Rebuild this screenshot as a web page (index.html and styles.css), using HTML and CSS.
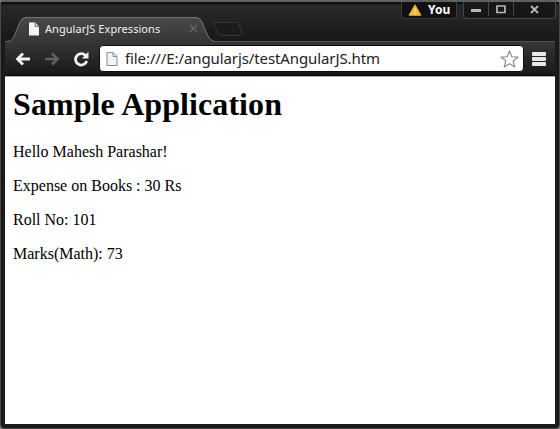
FILE: index.html
```
<!DOCTYPE html>
<html lang="en">
<head>
<meta charset="utf-8">
<title>AngularJS Expressions</title>
<link rel="stylesheet" href="styles.css">
</head>
<body>
<div class="window">
  <header class="strip">
    <div class="tab">
      <svg class="tab-shape" width="208" height="25" viewBox="0 0 208 25">
        <defs><linearGradient id="g" x1="0" y1="0" x2="0" y2="1"><stop offset="0" stop-color="#484848"/><stop offset="1" stop-color="#363636"/></linearGradient></defs>
        <path d="M0 25C5 24 6 22 8 17L13 5Q15 .5 19 .5H189Q193 .5 195 5L200 17Q203 24 208 25Z" fill="url(#g)"/>
        <path d="M0 24.5C5 24 6 22 8 17L13 5Q15 .5 19 .5H189Q193 .5 195 5L200 17Q203 24 208 24.5" fill="none" stroke="#747474"/>
      </svg>
      <div class="tab-content">
        <svg width="12" height="14" viewBox="0 0 12 14"><path d="M1 .5h6l4 4v9H1z" fill="#f3f3f3"/><path d="M7 .5v4h4" fill="#ccc" stroke="#777" stroke-width=".8"/></svg>
        <span class="tab-title">AngularJS Expressions</span>
        <svg class="tab-close" width="9" height="9" viewBox="0 0 9 9"><path d="M1 1l7 7M8 1L1 8" stroke="#626262" stroke-width="1.700"/></svg>
      </div>
    </div>
    <svg class="new-tab" width="32" height="15" viewBox="0 0 32 15"><path d="M3 .5H24Q26 .5 27 3L30 10Q31 13.500 28 13.500H9Q7 13.500 6 11L2 3Q1 .5 3 .5Z" fill="#1b1b1b" stroke="#383838"/></svg>
    <div class="controls">
      <div class="user">
        <svg width="14" height="12" viewBox="0 0 14 12"><path d="M7 .8L13 11.300H1Z" fill="#f9bd3c" stroke="#f0a020" stroke-linejoin="round"/><path d="M7 4v4M7 9v1.300" stroke="#ffd97a" stroke-width="1.300"/></svg>
        <span>You</span>
      </div>
      <div class="buttons">
        <div class="min"><svg width="10" height="4" viewBox="0 0 10 4"><path d="M0 0h10v3H0z" fill="#b8b8b8"/></svg></div>
        <div class="max"><svg width="10" height="9" viewBox="0 0 10 9"><path d="M1 1h8v6.500H1z" fill="none" stroke="#b8b8b8" stroke-width="1.700"/></svg></div>
        <div class="shut"><svg width="9" height="9" viewBox="0 0 9 9"><path d="M1 1l7 7M8 1L1 8" stroke="#b8b8b8" stroke-width="1.800"/></svg></div>
      </div>
    </div>
  </header>
  <nav class="toolbar">
    <svg width="16" height="14" viewBox="0 0 16 14"><path d="M8 1.500L2.500 7L8 12.500M3 7H15" fill="none" stroke="#f0f0f0" stroke-width="2.800"/></svg>
    <svg class="fwd" width="16" height="14" viewBox="0 0 16 14"><path d="M8 1.500L13.500 7L8 12.500M13 7H1" fill="none" stroke="#606060" stroke-width="2.600"/></svg>
    <svg class="reload" width="16" height="16" viewBox="0 0 16 16"><path d="M12.500 4.500A5.700 5.700 0 1 0 13.700 10" fill="none" stroke="#f0f0f0" stroke-width="2.800"/><path d="M15.500 .8V7.500H8.800Z" fill="#f0f0f0"/></svg>
    <div class="address">
      <svg width="12" height="14" viewBox="0 0 12 14"><path d="M1 .5h6l4 4v9H1z" fill="#f4f4f4" stroke="#8c8c8c"/><path d="M7 .5v4h4" fill="none" stroke="#8c8c8c"/></svg>
      <span class="url">file:///E:/angularjs/testAngularJS.htm</span>
      <svg class="star" width="19" height="18" viewBox="0 0 19 18"><path d="M9.500 1L11.800 6.700L18 7.100L13.200 11L14.800 17L9.500 13.700L4.200 17L5.800 11L1 7.100L7.200 6.700Z" fill="#fff" stroke="#888" stroke-width="1.100" stroke-linejoin="round"/></svg>
    </div>
    <svg class="menu" width="14" height="14" viewBox="0 0 14 14"><g fill="#e9e9e9"><rect width="14" height="4" rx="1"/><rect y="5" width="14" height="4" rx="1"/><rect y="10" width="14" height="4" rx="1"/></g></svg>
  </nav>
  <main class="page">
    <h1>Sample Application</h1>
    <p>Hello Mahesh Parashar!</p>
    <p>Expense on Books : 30 Rs</p>
    <p>Roll No: 101</p>
    <p>Marks(Math): 73</p>
  </main>
</div>
</body>
</html>
```
FILE: styles.css
```
* { box-sizing: border-box; }
body { margin: 0; background: #777; overflow: hidden; }
svg { display: block; flex: none; }
.window {
  width: 560px; height: 429px;
  display: flex; flex-direction: column;
  padding: 0 4px 4px;
  border: 1px solid #484848; border-top: 2px solid #606060; border-bottom-color: #444;
  border-radius: 5px;
  background: #1a1a1a;
  font-family: "Noto Sans", sans-serif;
}
.strip {
  height: 39px; flex: none; display: flex; align-items: flex-end;
  margin: 0 -4px; padding-left: 6px;
  background: linear-gradient(#101010 0, #101010 2px, #292929 3px, #1a1a1a 34px);
}
.tab { display: grid; width: 208px; height: 25px; margin-bottom: -1px; position: relative; }
.tab-shape, .tab-content { grid-area: 1 / 1; }
.tab-content { display: flex; align-items: center; padding: 0 17px 2px 21px; }
.tab-title {
  flex: 1; margin-left: 5px; color: #f2f2f2;
  font-size: 11px; line-height: 16px; letter-spacing: .05px; white-space: nowrap;
}
.new-tab { margin: 0 0 4px -3px; }
.controls { display: flex; align-self: flex-start; margin-left: auto; padding-right: 3px; gap: 6px; }
.user {
  display: flex; align-items: center; width: 56px; height: 17px; padding-left: 6px; gap: 6px;
  border: 1px solid #3c3c3c; border-top: 0; border-radius: 0 0 4px 4px;
  background: #111; color: #fff; font-size: 12px; font-weight: 700; line-height: 16px;
}
.buttons {
  display: flex; height: 17px; padding-bottom: 2px;
  border: 1px solid #474747; border-top: 0; border-radius: 0 0 4px 4px; background: #171717;
}
.buttons div { display: flex; align-items: center; justify-content: center; }
.min { width: 25px; padding-top: 4px; border-right: 1px solid #474747; }
.max { width: 25px; border-right: 1px solid #474747; }
.shut { width: 41px; }
.toolbar {
  height: 36px; flex: none; display: flex; align-items: center;
  padding: 0 9px 1px 10px;
  border-top: 1px solid #505050; border-bottom: 1px solid #aaa;
  background: linear-gradient(#363636, #1b1b1b 31px, #080808);
}
.fwd { margin-left: 13px; }
.reload { margin-left: 13px; }
.address {
  display: flex; align-items: center; flex: 1; height: 27px; margin: 0 8px 0 10px; padding: 0 4px 0 6px;
  background: #fff; border: 1px solid #0d0d0d; border-radius: 4px;
}
.url { margin: -2px 0 0 7px; font-size: 15px; line-height: 24px; letter-spacing: -.1px; color: #222; white-space: nowrap; }
.star { margin-left: auto; }
.page {
  flex: 1; padding: 8px; background: #fff; color: #000;
  font: 16px/18px "Liberation Serif", serif;
}
h1 { margin: 1px 0 21px; font-size: 32px; line-height: 36px; letter-spacing: .08px; }
p { margin: 0 0 16px; }
```
